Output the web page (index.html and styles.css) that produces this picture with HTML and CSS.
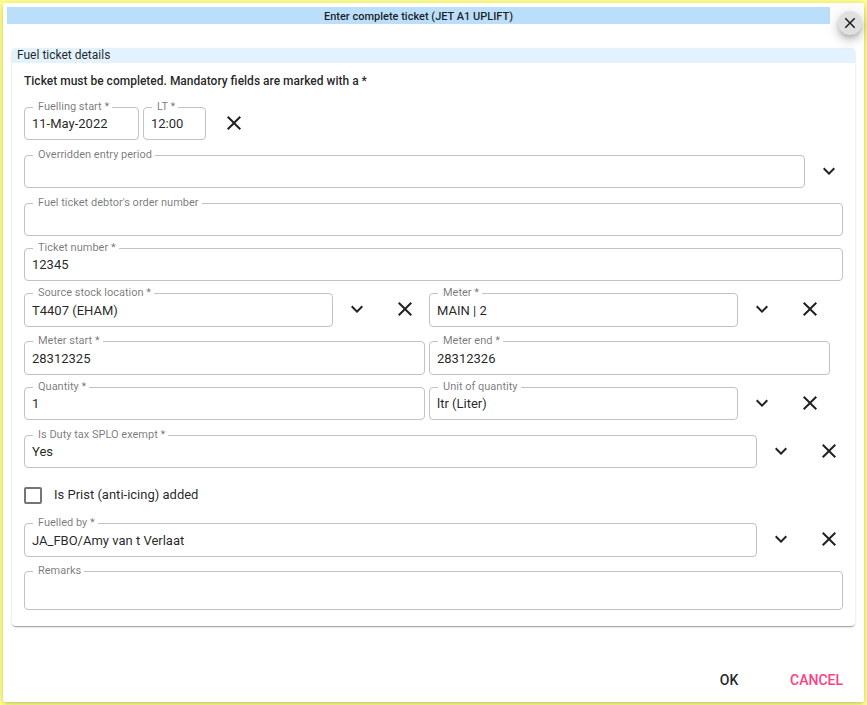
FILE: index.html
```html
<!DOCTYPE html>
<html lang="en">
<head>
<meta charset="utf-8">
<title>Enter complete ticket</title>
<link rel="stylesheet" href="styles.css">
</head>
<body>
<svg class="sprite" aria-hidden="true">
  <symbol id="i-close" viewBox="0 0 24 24"><path d="M19 6.41 17.59 5 12 10.59 6.41 5 5 6.41 10.59 12 5 17.59 6.41 19 12 13.41 17.59 19 19 17.59 13.41 12z"/></symbol>
  <symbol id="i-down" viewBox="0 0 24 24"><path d="M7.41 8.59 12 13.17l4.59-4.58L18 10l-6 6-6-6z"/></symbol>
</svg>
<main class="dialog">
  <header class="dialog-header">
    <h1 class="dialog-title">Enter complete ticket (JET A1 UPLIFT)</h1>
    <button class="dialog-close" type="button" aria-label="Close"><svg><use href="#i-close"/></svg></button>
  </header>
  <form class="ticket-form">
    <section class="card">
      <h2 class="card-title">Fuel ticket details</h2>
      <div class="card-body">
        <p class="hint">Ticket must be completed. Mandatory fields are marked with a *</p>
        <div class="row">
          <div class="field field-date"><label for="start">Fuelling start *</label><input id="start" value="11-May-2022"></div>
          <div class="field field-time"><label for="time">LT *</label><input id="time" value="12:00"></div>
          <button class="icon" type="button" aria-label="Clear"><svg><use href="#i-close"/></svg></button>
        </div>
        <div class="row">
          <div class="field"><label for="period">Overridden entry period</label><input id="period"></div>
          <button class="icon" type="button" aria-label="Open"><svg><use href="#i-down"/></svg></button>
        </div>
        <div class="row row-full">
          <div class="field"><label for="order">Fuel ticket debtor's order number</label><input id="order"></div>
        </div>
        <div class="row row-full">
          <div class="field"><label for="ticket">Ticket number *</label><input id="ticket" value="12345"></div>
        </div>
        <div class="pair tall">
          <div class="row">
            <div class="field"><label for="source">Source stock location *</label><input id="source" value="T4407 (EHAM)"></div>
            <button class="icon" type="button" aria-label="Open"><svg><use href="#i-down"/></svg></button>
            <button class="icon" type="button" aria-label="Clear"><svg><use href="#i-close"/></svg></button>
          </div>
          <div class="row">
            <div class="field"><label for="meter">Meter *</label><input id="meter" value="MAIN | 2"></div>
            <button class="icon" type="button" aria-label="Open"><svg><use href="#i-down"/></svg></button>
            <button class="icon" type="button" aria-label="Clear"><svg><use href="#i-close"/></svg></button>
          </div>
        </div>
        <div class="pair tall">
          <div class="row row-plain">
            <div class="field"><label for="mstart">Meter start *</label><input id="mstart" value="28312325"></div>
          </div>
          <div class="row row-plain">
            <div class="field"><label for="mend">Meter end *</label><input id="mend" value="28312326"></div>
          </div>
        </div>
        <div class="pair">
          <div class="row row-plain">
            <div class="field"><label for="qty">Quantity *</label><input id="qty" value="1"></div>
          </div>
          <div class="row">
            <div class="field"><label for="unit">Unit of quantity</label><input id="unit" value="ltr (Liter)"></div>
            <button class="icon" type="button" aria-label="Open"><svg><use href="#i-down"/></svg></button>
            <button class="icon" type="button" aria-label="Clear"><svg><use href="#i-close"/></svg></button>
          </div>
        </div>
        <div class="row">
          <div class="field"><label for="duty">Is Duty tax SPLO exempt *</label><input id="duty" value="Yes"></div>
          <button class="icon" type="button" aria-label="Open"><svg><use href="#i-down"/></svg></button>
          <button class="icon" type="button" aria-label="Clear"><svg><use href="#i-close"/></svg></button>
        </div>
        <div class="check">
          <input id="prist" type="checkbox"><label for="prist">Is Prist (anti-icing) added</label>
        </div>
        <div class="row tall">
          <div class="field"><label for="by">Fuelled by *</label><input id="by" value="JA_FBO/Amy van t Verlaat"></div>
          <button class="icon" type="button" aria-label="Open"><svg><use href="#i-down"/></svg></button>
          <button class="icon" type="button" aria-label="Clear"><svg><use href="#i-close"/></svg></button>
        </div>
        <div class="row row-full">
          <div class="field"><label for="remarks">Remarks</label><textarea id="remarks" rows="1"></textarea></div>
        </div>
      </div>
    </section>
    <footer class="actions">
      <button class="action" type="submit">OK</button>
      <button class="action action-cancel" type="button">CANCEL</button>
    </footer>
  </form>
</main>
</body>
</html>
```
FILE: styles.css
```css
* { box-sizing: border-box; }

body {
  margin: 0;
  padding: 3px;
  background: #ffff8d;
  color: rgba(0, 0, 0, 0.87);
  font: 400 13px/16px Roboto, "Liberation Sans", sans-serif;
}

button, input, textarea { font: inherit; color: inherit; }

button {
  border: 0;
  background: none;
  cursor: pointer;
}

svg { display: block; fill: currentColor; }

.sprite { position: absolute; width: 0; height: 0; }

.dialog {
  display: flex;
  flex-direction: column;
  min-height: calc(100vh - 6px);
  padding: 4px;
  border-radius: 2px;
  background: #fff;
  box-shadow: 0 2px 4px -1px rgba(0, 0, 0, 0.2), 0 1px 10px rgba(0, 0, 0, 0.12);
}

.dialog-header { position: relative; padding-right: 30px; }

.dialog-title {
  margin: 0;
  padding-top: 2px;
  background: #bbdefb;
  font-size: 11px;
  font-weight: 500;
  line-height: 15px;
  text-align: center;
}

.dialog-close {
  position: absolute;
  top: 4px;
  right: -2px;
  display: grid;
  place-items: center;
  width: 24px;
  height: 24px;
  padding: 0;
  border-radius: 50%;
  background: #e0e0e0;
  box-shadow: 0 3px 5px -1px rgba(0, 0, 0, 0.2), 0 6px 10px rgba(0, 0, 0, 0.14), 0 1px 18px rgba(0, 0, 0, 0.12);
}

.dialog-close svg { width: 18px; height: 18px; }

.ticket-form {
  display: flex;
  flex: 1;
  flex-direction: column;
  justify-content: space-between;
  padding-top: 24px;
}

.card {
  margin: 0 5px;
  border-radius: 4px;
  box-shadow: 0 2px 1px -1px rgba(0, 0, 0, 0.2), 0 1px 1px rgba(0, 0, 0, 0.14), 0 1px 3px rgba(0, 0, 0, 0.12);
}

.card-title {
  margin: 0;
  padding: 0 5px;
  border-radius: 4px 4px 0 0;
  background: #e3f2fd;
  font-size: 12px;
  font-weight: 400;
  line-height: 15px;
}

.card-body { padding: 10px 2px 12px 12px; }

.hint {
  margin: 0 0 10px;
  font-size: 12px;
  font-weight: 500;
}

.row { display: flex; align-items: flex-start; }
.row-full { padding-right: 10px; }
.row-plain { padding-right: 4px; }

.pair {
  display: grid;
  grid-template-columns: 1fr 1fr;
  padding-right: 19px;
}

.field {
  position: relative;
  flex: 1;
  min-width: 0;
  padding: 8px 0 4px;
}

.field-date { flex: 0 0 115px; margin-right: 4px; }
.field-time { flex: 0 0 63px; margin-right: 4px; }

/* The label sits on the outline and masks it to form the notch. */
.field label {
  position: absolute;
  top: 2px;
  left: 9px;
  padding: 0 3px 0 5px;
  background: #fff;
  color: rgba(0, 0, 0, 0.54);
  font-size: 11px;
  line-height: 12px;
}

.field input, .field textarea {
  display: block;
  width: 100%;
  height: 33px;
  padding: 0 7px;
  border: 1px solid #c2c2c2;
  border-radius: 4px;
  outline: 0;
  background: none;
}

.field textarea { height: 39px; padding: 10px 7px; resize: none; }
.tall .field input { height: 34px; }

.icon {
  display: grid;
  place-items: center;
  flex: 0 0 48px;
  height: 48px;
  padding: 0;
}

.icon svg { width: 24px; height: 24px; }

.check {
  display: flex;
  align-items: center;
  gap: 12px;
  height: 40px;
}

.check input {
  appearance: none;
  width: 18px;
  height: 17px;
  margin: 0;
  border: 2px solid #757575;
  border-radius: 2px;
}

.check input:checked { background: #757575; }

.actions {
  display: flex;
  justify-content: flex-end;
  gap: 13px;
}

.action {
  min-width: 64px;
  height: 36px;
  padding: 0 16px;
  font-size: 14px;
  font-weight: 500;
}

.action-cancel { padding-right: 17px; color: #ff4081; }
```
